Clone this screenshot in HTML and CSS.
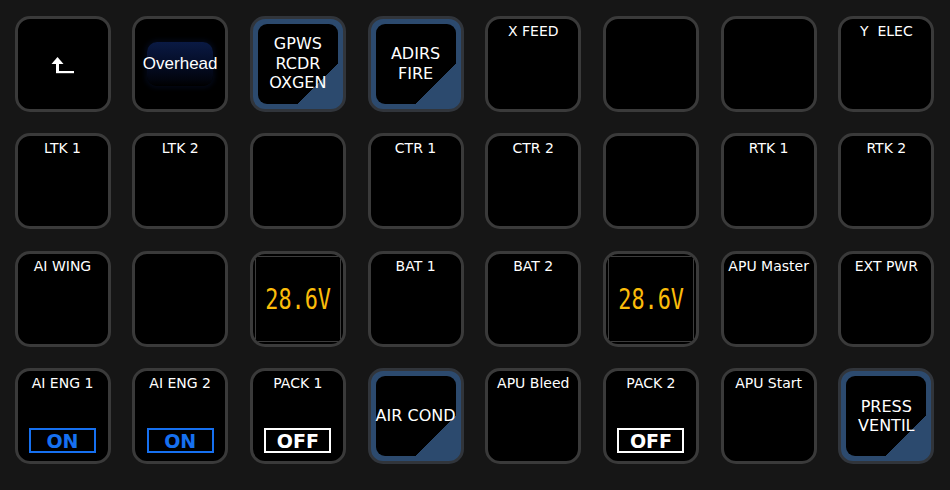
FILE: index.html
```html
<!DOCTYPE html>
<html lang="en">
<head>
  <meta charset="UTF-8" />
  <title>Stream Deck - Overhead</title>
  <link rel="stylesheet" href="styles.css">
</head>
<body>
  <div class="deck">
    <!-- row 1 -->
    <div class="key center">
      <svg class="back" width="24" height="18" viewBox="0 0 24 18">
        <polygon points="6.5,1 0.5,8 12.5,8" fill="#fff"/>
        <rect x="5" y="7" width="3" height="10" fill="#fff"/>
        <rect x="5" y="15" width="18" height="2.2" fill="#fff"/>
      </svg>
    </div>
    <div class="key center"><span class="glow">Overhead</span></div>
    <div class="key lit"><div class="pane">GPWS<br>RCDR<br>OXGEN</div></div>
    <div class="key lit"><div class="pane">ADIRS<br>FIRE</div></div>
    <div class="key"><span class="label">X FEED</span></div>
    <div class="key"></div>
    <div class="key"></div>
    <div class="key"><span class="label">Y&nbsp;&nbsp;ELEC</span></div>

    <!-- row 2 -->
    <div class="key"><span class="label">LTK 1</span></div>
    <div class="key"><span class="label">LTK 2</span></div>
    <div class="key"></div>
    <div class="key"><span class="label">CTR 1</span></div>
    <div class="key"><span class="label">CTR 2</span></div>
    <div class="key"></div>
    <div class="key"><span class="label">RTK 1</span></div>
    <div class="key"><span class="label">RTK 2</span></div>

    <!-- row 3 -->
    <div class="key"><span class="label">AI WING</span></div>
    <div class="key"></div>
    <div class="key meter"><div class="frame"><span class="volts">28.6V</span></div></div>
    <div class="key"><span class="label">BAT 1</span></div>
    <div class="key"><span class="label">BAT 2</span></div>
    <div class="key meter"><div class="frame"><span class="volts">28.6V</span></div></div>
    <div class="key"><span class="label">APU Master</span></div>
    <div class="key"><span class="label">EXT PWR</span></div>

    <!-- row 4 -->
    <div class="key"><span class="label">AI ENG 1</span><span class="state on">ON</span></div>
    <div class="key"><span class="label">AI ENG 2</span><span class="state on">ON</span></div>
    <div class="key"><span class="label">PACK 1</span><span class="state off">OFF</span></div>
    <div class="key lit"><div class="pane">AIR COND</div></div>
    <div class="key"><span class="label">APU Bleed</span></div>
    <div class="key"><span class="label">PACK 2</span><span class="state off">OFF</span></div>
    <div class="key"><span class="label">APU Start</span></div>
    <div class="key lit"><div class="pane">PRESS<br>VENTIL</div></div>
  </div>
</body>
</html>
```

FILE: styles.css
```css
html, body { margin: 0; height: 100%; background: #161616; }
body { font-family: "DejaVu Sans", sans-serif; color: #fff; }

.deck { display: grid; grid-template-columns: repeat(8, 96px); grid-auto-rows: 96px; column-gap: 21.7px; row-gap: 21.5px; padding: 15.5px 0 0 14.5px; }

.key { box-sizing: border-box; border: 3px solid #3a3a3a; border-radius: 15px; background: #000; display: flex; flex-direction: column; align-items: center; overflow: hidden; }
.key.center { justify-content: center; }
.label { font-size: 14px; line-height: 16px; padding-top: 4px; white-space: nowrap; }

.back { margin: 2px 0 0 1px; }

.glow { display: flex; justify-content: center; align-items: center; width: 66px; height: 44px; margin-top: 1px; border-radius: 10px; background: linear-gradient(#0a1a44, #050e2a 45%, #02050f 85%, #000); box-shadow: 0 0 5px 2px rgba(6, 14, 40, 0.55); font-family: "Liberation Sans", Arial, sans-serif; font-size: 17px; white-space: nowrap; }

.key.lit { border-color: #31353b; background: #2c4a6e; padding: 5px; }
.pane { flex: 1; align-self: stretch; border-radius: 9px; background: linear-gradient(135deg, #000 75%, transparent 75%); display: flex; align-items: center; justify-content: center; text-align: center; font-size: 16px; line-height: 19.5px; white-space: nowrap; }

.meter { padding: 2px; }
.frame { flex: 1; align-self: stretch; border: 1px solid #3c3c3c; display: flex; align-items: center; justify-content: center; }
.volts { font-family: "DejaVu Sans Mono", monospace; font-size: 28px; color: #fbbc0a; transform: scaleX(0.78); margin-top: 1px; }

.state { margin-top: auto; margin-bottom: 8px; box-sizing: border-box; width: 67px; height: 25px; display: flex; align-items: center; justify-content: center; font-size: 19px; font-weight: bold; }
.state.on { border: 2px solid #1670f0; color: #1670f0; }
.state.off { border: 2px solid #fff; color: #fff; }
```
